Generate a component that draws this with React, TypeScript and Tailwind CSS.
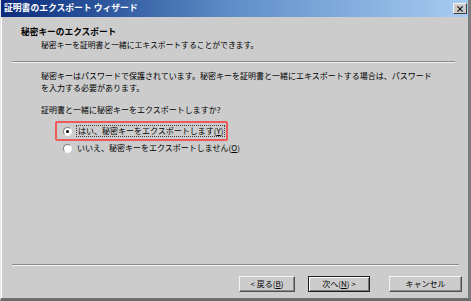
const jp = "font-['Noto_Sans_CJK_JP',sans-serif]";

function Radio({ checked }: { checked?: boolean }) {
  return (
    <span className="relative flex h-[9px] w-[9px] shrink-0 items-center justify-center rounded-full border border-t-[#808080] border-l-[#808080] border-r-[#f4f4f4] border-b-[#f4f4f4] bg-white">
      {checked && <span className="h-[3px] w-[3px] rounded-full bg-black" />}
    </span>
  );
}

function WinButton({
  children,
  primary,
}: {
  children: React.ReactNode;
  primary?: boolean;
}) {
  return (
    <div
      className={
        "flex h-[16px] items-center justify-center bg-[#cccccc] text-[8px] leading-none text-black " +
        (primary
          ? "w-[62px] border border-[#202020] shadow-[inset_1px_1px_0_#ffffff,inset_-1px_-1px_0_#7a7a7a]"
          : "w-[56px] border border-t-[#f4f4f4] border-l-[#f4f4f4] border-r-[#505050] border-b-[#505050] shadow-[inset_-1px_-1px_0_#8a8a8a]")
      }
    >
      {children}
    </div>
  );
}

export default function App() {
  return (
    <div
      className={`${jp} flex h-[301px] w-[471px] flex-col overflow-hidden border-l border-r-[3px] border-b-[3px] border-l-[#e6e6e6] border-r-[#7c7c7c] border-b-[#6c6c6c] bg-[#cccccc]`}
    >
      {/* title bar */}
      <div className="flex h-[17px] shrink-0 items-center justify-between bg-gradient-to-r from-[#0c2a7c] via-[#5f8fc8] to-[#a8ccf2] pl-[3px] pr-[1px]">
        <span className="text-[8.8px] font-bold leading-none text-white">
          証明書のエクスポート ウィザード
        </span>
        <div className="flex h-[11px] w-[14px] items-center justify-center border border-t-[#f4f4f4] border-l-[#f4f4f4] border-r-[#404040] border-b-[#404040] bg-[#cccccc] text-[9px] font-bold leading-none text-black">
          ×
        </div>
      </div>

      {/* header */}
      <div className="border-l border-l-white">
        <div className="pl-[19px] pt-[10px] text-[8.7px] font-bold leading-[10px] text-black">
          秘密キーのエクスポート
        </div>
        <div className="pl-[39px] pt-[3px] text-[7.8px] leading-[10px] text-black">
          秘密キーを証明書と一緒にエキスポートすることができます。
        </div>
        <div className="ml-[10px] mr-[13px] mt-[11px] h-[2px] border-t border-b border-t-[#8a8a8a] border-b-[#f2f2f2]" />

        {/* content */}
        <div className="pl-[39px] pt-[7px] text-[8px] leading-[12px] text-black">
          <p>
            秘密キーはパスワードで保護されています。秘密キーを証明書と一緒にエキスポートする場合は、パスワード
          </p>
          <p>を入力する必要があります。</p>
          <p className="mt-[10px]">証明書と一緒に秘密キーをエクスポートしますか?</p>

          <div className="ml-[14px] mt-[5px] flex w-[173px] items-center gap-[4px] rounded-[2px] border-2 border-[#ec5a5a] py-[2px] pl-[6px]">
            <Radio checked />
            <span className="border border-dotted border-[#404040] px-[1px] leading-[10px]">
              はい、秘密キーをエクスポートします(<span className="underline">Y</span>)
            </span>
          </div>
          <div className="ml-[14px] mt-[1px] flex items-center gap-[4px] pl-[8px]">
            <Radio />
            <span className="px-[1px] leading-[12px]">
              いいえ、秘密キーをエクスポートしません(<span className="underline">O</span>)
            </span>
          </div>
        </div>
      </div>

      <div className="flex-1 border-l border-l-white" />

      {/* footer */}
      <div className="border-l border-l-white pb-[6px]">
        <div className="ml-[10px] mr-[9px] h-[2px] border-t border-b border-t-[#8a8a8a] border-b-[#f2f2f2]" />
        <div className="mt-[10px] flex justify-end pr-[6px]">
          <WinButton>&lt; 戻る(<span className="underline">B</span>)</WinButton>
          <div className="ml-[13px]">
            <WinButton primary>
              次へ(<span className="underline">N</span>) &gt;
            </WinButton>
          </div>
          <div className="ml-[19px] w-[73px]">
            <div className="flex h-[16px] w-[73px] items-center justify-center border border-t-[#f4f4f4] border-l-[#f4f4f4] border-r-[#505050] border-b-[#505050] bg-[#cccccc] text-[8px] leading-none text-black shadow-[inset_-1px_-1px_0_#8a8a8a]">
              キャンセル
            </div>
          </div>
        </div>
      </div>
    </div>
  );
}
